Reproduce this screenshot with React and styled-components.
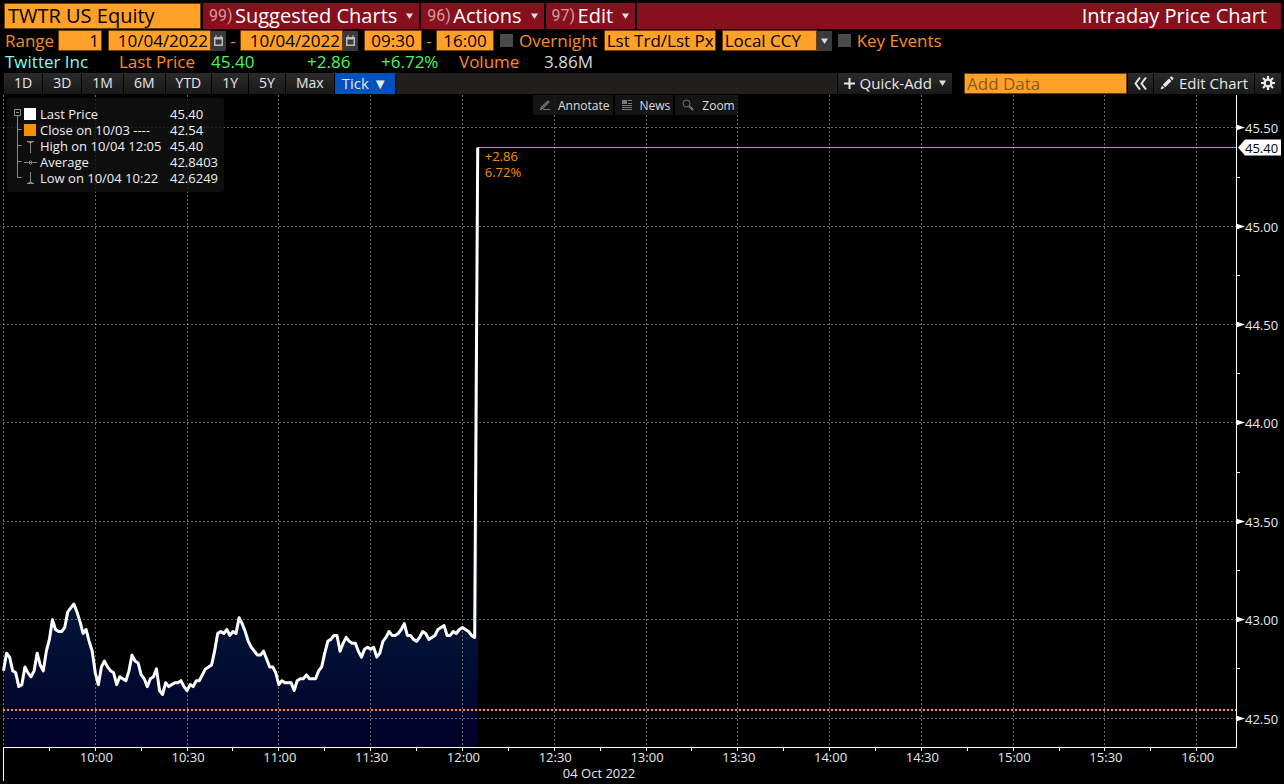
import { useLayoutEffect, useRef, useState } from "react";
import styled, { createGlobalStyle } from "styled-components";

const COLORS = {
  amber: "#ffa028",
  label: "#fb8b1e",
  maroon: "#87101d",
  up: "#4af658",
  cyan: "#7fffe4",
  text: "#e8e8e8",
};

/* One price per minute, from 09:30 to 12:05 */
const PRICES = [
  42.74, 42.83, 42.81, 42.74, 42.73, 42.66, 42.67, 42.76, 42.73, 42.71,
  42.74, 42.83, 42.77, 42.74, 42.84, 42.9, 43.0, 42.95, 42.94, 42.94,
  42.96, 43.04, 43.06, 43.08, 43.04, 42.99, 42.93, 42.95, 42.89, 42.84,
  42.73, 42.67, 42.76, 42.79, 42.76, 42.74, 42.73, 42.67, 42.71, 42.7,
  42.69, 42.74, 42.82, 42.79, 42.78, 42.72, 42.7, 42.66, 42.7, 42.71,
  42.75, 42.64, 42.62, 42.68, 42.66, 42.67, 42.68, 42.68, 42.69, 42.66,
  42.64, 42.67, 42.66, 42.69, 42.69, 42.72, 42.75, 42.76, 42.77, 42.84,
  42.93, 42.94, 42.93, 42.95, 42.92, 42.94, 42.93, 43.01, 42.98, 42.94,
  42.89, 42.86, 42.84, 42.82, 42.82, 42.84, 42.8, 42.76, 42.76, 42.73,
  42.67, 42.69, 42.68, 42.68, 42.68, 42.64, 42.69, 42.7, 42.7, 42.72,
  42.7, 42.7, 42.7, 42.74, 42.76, 42.83, 42.89, 42.9, 42.92, 42.92,
  42.84, 42.88, 42.91, 42.89, 42.88, 42.88, 42.84, 42.81, 42.85, 42.86,
  42.85, 42.86, 42.81, 42.83, 42.89, 42.91, 42.94, 42.92, 42.92, 42.93,
  42.95, 42.98, 42.92, 42.92, 42.9, 42.89, 42.91, 42.94, 42.93, 42.9,
  42.91, 42.92, 42.95, 42.96, 42.97, 42.92, 42.92, 42.94, 42.93, 42.95,
  42.96, 42.95, 42.94, 42.92, 42.91, 45.4,
];

const PRICE_MIN = 42.353;
const PRICE_MAX = 45.667;
const OPEN_MINUTE = 9 * 60 + 30;
const SESSION_MINUTES = 403;
const CLOSE_PRICE = 42.54;
const LAST_PRICE = 45.4;
const MARGIN = { left: 3, right: 48, bottom: 37 };

const RANGES = ["1D", "3D", "1M", "6M", "YTD", "1Y", "5Y", "Max"];

function App() {
  return (
    <Page>
      <GlobalStyle />
      <TitleBar />
      <Filters />
      <Quote />
      <Toolbar />
      <ChartPanel />
    </Page>
  );
}

function TitleBar() {
  return (
    <TitleRow>
      <SecurityInput aria-label="Security" defaultValue="TWTR US Equity" />
      <MenuButton>
        <MenuNumber>99)</MenuNumber>Suggested Charts<Caret />
      </MenuButton>
      <MenuButton>
        <MenuNumber>96)</MenuNumber>Actions<Caret />
      </MenuButton>
      <MenuButton>
        <MenuNumber>97)</MenuNumber>Edit<Caret />
      </MenuButton>
      <PageTitle>Intraday Price Chart</PageTitle>
    </TitleRow>
  );
}

function Caret() {
  return (
    <CaretIcon width="7" height="6" viewBox="0 0 7 6" aria-hidden="true">
      <path d="M0 0.5h7L3.5 6z" fill="currentColor" />
    </CaretIcon>
  );
}

function DateField({ label, value }) {
  return (
    <Group>
      <Field $width={103} aria-label={label} defaultValue={value} />
      <IconButton aria-label={`Pick ${label}`}>
        <svg width="11" height="13" viewBox="0 0 11 13" aria-hidden="true">
          <path d="M1 3h9v9H1zM2.5 5.5v5h6v-5z" fill="#bdbdbd" fillRule="evenodd" />
          <path d="M3 1v3M8 1v3" stroke="#bdbdbd" />
        </svg>
      </IconButton>
    </Group>
  );
}

function Filters() {
  return (
    <FilterRow>
      <RangeLabel htmlFor="range">Range</RangeLabel>
      <Field id="range" $width={44} defaultValue="1" />
      <Group>
        <DateField label="start date" value="10/04/2022" />
        <Dash>-</Dash>
        <DateField label="end date" value="10/04/2022" />
      </Group>
      <Group>
        <Field $width={58} $center aria-label="Start time" defaultValue="09:30" />
        <Dash>-</Dash>
        <Field $width={58} $center aria-label="End time" defaultValue="16:00" />
      </Group>
      <CheckLabel>
        <Checkbox type="checkbox" />
        Overnight
      </CheckLabel>
      <Select $width={112} aria-label="Price source">
        <option>Lst Trd/Lst Px</option>
      </Select>
      <Group>
        <Select $width={95} aria-label="Currency">
          <option>Local CCY</option>
        </Select>
        <SelectArrow>
          <Caret />
        </SelectArrow>
      </Group>
      <CheckLabel>
        <Checkbox type="checkbox" />
        Key Events
      </CheckLabel>
    </FilterRow>
  );
}

function Quote() {
  return (
    <QuoteRow>
      <Name>Twitter Inc</Name>
      <Caption $width={92}>Last Price</Caption>
      <Change $width={96}>45.40</Change>
      <Change $width={74}>+2.86</Change>
      <Change $width={78}>+6.72%</Change>
      <Caption $width={85}>Volume</Caption>
      <Volume>3.86M</Volume>
    </QuoteRow>
  );
}

function Toolbar() {
  return (
    <ToolRow>
      {RANGES.map((range) => (
        <RangeButton key={range}>{range}</RangeButton>
      ))}
      <TickButton>Tick ▼</TickButton>
      <Spacer />
      <ActionButton>
        <svg width="11" height="11" viewBox="0 0 11 11" aria-hidden="true">
          <path d="M5.5 0v11M0 5.5h11" stroke="currentColor" strokeWidth="2" />
        </svg>
        Quick-Add
        <Caret />
      </ActionButton>
      <DataInput aria-label="Add Data" placeholder="Add Data" />
      <ActionButton aria-label="Collapse">
        <svg width="13" height="13" viewBox="0 0 13 13" aria-hidden="true">
          <path
            d="M6 0.5L1.5 6.5L6 12.5M12 0.5L7.5 6.5L12 12.5"
            fill="none"
            stroke="currentColor"
            strokeWidth="2"
          />
        </svg>
      </ActionButton>
      <ActionButton>
        <svg width="14" height="14" viewBox="0 0 14 14" aria-hidden="true">
          <path
            d="M0.5 13.5L2 9.5L4.5 12zM2.8 8.8L9 2.6L11.4 5L5.2 11.2zM9.8 1.8L11 0.6Q11.6 0.2 12.2 0.8L13.2 1.8Q13.8 2.4 13.3 3L12.2 4.2z"
            fill="currentColor"
          />
        </svg>
        Edit Chart
      </ActionButton>
      <ActionButton aria-label="Settings">
        <svg width="14" height="14" viewBox="0 0 14 14" aria-hidden="true">
          <circle cx="7" cy="7" r="3.4" fill="none" stroke="currentColor" strokeWidth="2.4" />
          <path
            d="M7 0v3M7 11v3M0 7h3M11 7h3M2 2l2.2 2.2M9.8 9.8L12 12M12 2L9.8 4.2M4.2 9.8L2 12"
            stroke="currentColor"
            strokeWidth="2.2"
          />
        </svg>
      </ActionButton>
    </ToolRow>
  );
}

function ChartPanel() {
  const ref = useRef(null);
  const [size, setSize] = useState(null);

  useLayoutEffect(() => {
    const measure = () => {
      const { width, height } = ref.current.getBoundingClientRect();
      setSize({ width, height });
    };
    measure();
    const observer = new ResizeObserver(measure);
    observer.observe(ref.current);
    return () => observer.disconnect();
  }, []);

  return (
    <Panel ref={ref}>
      {size && <Chart width={size.width} height={size.height} />}
      <Legend />
      <ChartTools>
        <ChartTool>
          <svg width="10" height="12" viewBox="0 0 10 12" aria-hidden="true">
            <path d="M0.5 10.5L1.5 8L8 2L9 3L3 9zM3 10.5h7" fill="none" stroke="#777" strokeWidth="1.2" />
          </svg>
          Annotate
        </ChartTool>
        <ChartTool>
          <svg width="10" height="10" viewBox="0 0 10 10" aria-hidden="true">
            <path d="M0 0h5v4H0zM6 0h4v1H6zM6 3h4v1H6zM0 5h10v1H0zM0 7h10v1H0zM0 9h10v1H0z" fill="#777" />
          </svg>
          News
        </ChartTool>
        <ChartTool>
          <svg width="12" height="12" viewBox="0 0 12 12" aria-hidden="true">
            <circle cx="4.5" cy="4.5" r="3.5" fill="none" stroke="#777" />
            <path d="M7.5 7.5L11 11" stroke="#777" strokeWidth="2" />
          </svg>
          Zoom
        </ChartTool>
      </ChartTools>
    </Panel>
  );
}

function formatTime(minute) {
  const hours = Math.floor(minute / 60);
  return `${hours}:${String(minute % 60).padStart(2, "0")}`;
}

function Chart({ width, height }) {
  const right = width - MARGIN.right;
  const bottom = height - MARGIN.bottom;
  const x = (minute) =>
    MARGIN.left + 0.5 + (minute / SESSION_MINUTES) * (right - MARGIN.left);
  const y = (price) =>
    ((PRICE_MAX - price) / (PRICE_MAX - PRICE_MIN)) * bottom;
  const crisp = (value) => Math.floor(value) + 0.5;

  const line = PRICES.map((price, minute) => `${x(minute)},${y(price)}`).join(" ");
  const lastX = x(PRICES.length - 1);
  const lastY = crisp(y(LAST_PRICE));

  const times = [];
  for (let minute = 0; minute <= 390; minute += 15) times.push(minute);
  const levels = [];
  for (let price = 42.5; price <= 45.5; price += 0.25) levels.push(price);

  return (
    <Plot role="img" aria-label="TWTR intraday price">
      <defs>
        <linearGradient id="area" gradientUnits="userSpaceOnUse" x1="0" x2="0" y1={bottom * 0.75} y2={bottom}>
          <stop offset="0" stopColor="#001a3a" />
          <stop offset="1" stopColor="#02002a" />
        </linearGradient>
      </defs>
      <polygon points={`${x(0)},${bottom} ${line} ${lastX},${bottom}`} fill="url(#area)" />
      <g stroke="#8c8c8c" strokeOpacity="0.75" strokeDasharray="2 2">
        {times.filter((minute) => minute % 30 === 0).map((minute) => (
          <line key={minute} x1={crisp(x(minute))} x2={crisp(x(minute))} y1="0" y2={bottom} />
        ))}
        {levels.filter((price) => price % 0.5 === 0).map((price) => (
          <line key={price} x1={MARGIN.left} x2={right} y1={crisp(y(price))} y2={crisp(y(price))} />
        ))}
      </g>
      <line
        x1={MARGIN.left}
        x2={right}
        y1={Math.round(y(CLOSE_PRICE))}
        y2={Math.round(y(CLOSE_PRICE))}
        stroke="#ff9a0c"
        strokeWidth="2"
        strokeDasharray="2 2"
      />
      <line x1={lastX} x2={right} y1={lastY} y2={lastY} stroke="#f39200" />
      <polyline points={line} fill="none" stroke="#fff" strokeWidth="3" strokeLinejoin="round" />

      <g stroke="#fff">
        <line x1={right + 0.5} x2={right + 0.5} y1="0" y2={bottom + 1} />
        <line x1={MARGIN.left} x2={right} y1={bottom + 0.5} y2={bottom + 0.5} />
        <line x1={MARGIN.left + 0.5} x2={MARGIN.left + 0.5} y1={bottom} y2={bottom + 34} />
        {times.slice(1).map((minute) => (
          <line key={minute} x1={crisp(x(minute))} x2={crisp(x(minute))} y1={bottom} y2={bottom + 4} />
        ))}
        {levels.filter((price) => price % 0.5 !== 0).map((price) => (
          <line key={price} x1={right} x2={right + 4} y1={crisp(y(price))} y2={crisp(y(price))} />
        ))}
      </g>

      {levels.filter((price) => price % 0.5 === 0).map((price) => {
        const top = crisp(y(price));
        return (
          <g key={price}>
            <path d={`M${right} ${top - 3}l9 3l-9 3z`} fill="#fff" />
            <AxisText x={right + 9} y={top + 5}>{price.toFixed(2)}</AxisText>
          </g>
        );
      })}
      <path d={`M${right + 2} ${lastY}l7 -8h36v16h-36z`} fill="#fff" />
      <AxisText x={right + 9} y={lastY + 5} $color="#000">{LAST_PRICE.toFixed(2)}</AxisText>

      {times.slice(1).filter((minute) => minute % 30 === 0).map((minute) => (
        <AxisText key={minute} x={x(minute) + 1} y={bottom + 15} textAnchor="middle">
          {formatTime(OPEN_MINUTE + minute)}
        </AxisText>
      ))}
      <AxisText x={width / 2 - 43} y={bottom + 31} textAnchor="middle">04 Oct 2022</AxisText>

      <AxisText x={lastX + 7} y={lastY + 13} $color="#f39200">+2.86</AxisText>
      <AxisText x={lastX + 7} y={lastY + 29} $color="#f39200">6.72%</AxisText>
    </Plot>
  );
}

function Legend() {
  return (
    <LegendBox>
      <svg width="10" height="80" viewBox="0 0 10 80" aria-hidden="true">
        <path
          d="M0.5 3.5h6v6h-6zM2 6.5h3M3.5 10v61.5M3.5 23.5h4M3.5 39.5h4M3.5 55.5h4M3.5 71.5h4"
          fill="none"
          stroke="#8a8a8a"
        />
      </svg>
      <LegendTable>
        <tbody>
          <tr>
            <td><Swatch $color="#fff" /></td>
            <th scope="row">Last Price</th>
            <td>45.40</td>
          </tr>
          <tr>
            <td><Swatch $color="#f39200" /></td>
            <th scope="row">Close on 10/03 ----</th>
            <td>42.54</td>
          </tr>
          <tr>
            <td><Marker d="M3 1.5h7M6.5 2v11M4.5 2.5h4" /></td>
            <th scope="row">High on 10/04 12:05</th>
            <td>45.40</td>
          </tr>
          <tr>
            <td><Marker d="M0 6.5h4M9 6.5h4M4.5 6.5l2 -2l2 2l-2 2zM5 6.5h3" /></td>
            <th scope="row">Average</th>
            <td>42.8403</td>
          </tr>
          <tr>
            <td><Marker d="M3 11.5h7M6.5 0v11M4.5 10.5h4" /></td>
            <th scope="row">Low on 10/04 10:22</th>
            <td>42.6249</td>
          </tr>
        </tbody>
      </LegendTable>
    </LegendBox>
  );
}

function Marker({ d }) {
  return (
    <svg width="13" height="13" viewBox="0 0 13 13" aria-hidden="true">
      <path d={d} fill="none" stroke="#8a8a8a" />
    </svg>
  );
}

const GlobalStyle = createGlobalStyle`
  * {
    box-sizing: border-box;
  }

  body {
    margin: 0;
    background: #000;
    color: ${COLORS.text};
    font-family: "Open Sans", "Noto Sans", sans-serif;
  }

  button, input, select {
    margin: 0;
    border: none;
    border-radius: 0;
    font: inherit;
    color: inherit;
  }
`;

const Page = styled.main`
  display: flex;
  flex-direction: column;
  height: 100vh;
  overflow: hidden;
`;

const TitleRow = styled.header`
  display: flex;
  gap: 2px;
  height: 30px;
  padding: 3px 3px 1px 4px;
  font-size: 20px;
  line-height: 26px;
  white-space: nowrap;
`;

const SecurityInput = styled.input`
  width: 197px;
  padding: 0 3px;
  border: 1px solid #6b3d05;
  background: ${COLORS.amber};
  color: #000;
`;

const MenuButton = styled.button`
  display: flex;
  align-items: center;
  padding: 0 6px;
  background: ${COLORS.maroon};
  color: #fff;
`;

const MenuNumber = styled.span`
  width: 26px;
  color: #d39aa2;
  font-family: Roboto, sans-serif;
  font-size: 16px;
  text-align: left;
`;

const CaretIcon = styled.svg`
  margin-left: 9px;
  color: #ddd;
`;

const PageTitle = styled.h1`
  flex: 1;
  margin: 0;
  padding-right: 14px;
  background: ${COLORS.maroon};
  color: #fff;
  font-size: 20px;
  font-weight: 400;
  text-align: right;
`;

const FilterRow = styled.form`
  display: flex;
  align-items: center;
  gap: 6px;
  height: 21px;
  padding-left: 5px;
  color: ${COLORS.label};
  font-size: 17px;
  line-height: 19px;
  white-space: nowrap;
`;

const RangeLabel = styled.label`
  width: 47px;
`;

const Field = styled.input`
  width: ${(p) => p.$width}px;
  height: 21px;
  padding: 0 2px;
  border: 1px solid #6b3d05;
  background: ${COLORS.amber};
  color: #000;
  text-align: ${(p) => (p.$center ? "center" : "right")};
`;

const Group = styled.div`
  display: flex;
  align-items: center;
`;

const IconButton = styled.button`
  display: grid;
  place-items: center;
  width: 15px;
  height: 20px;
  padding: 0;
  background: #3a3a3a;
`;

const Dash = styled.span`
  width: 14px;
  text-align: center;
`;

const CheckLabel = styled.label`
  display: flex;
  align-items: center;
  gap: 6px;
`;

const Checkbox = styled.input`
  appearance: none;
  width: 13px;
  height: 13px;
  background: #4a4a4a;

  &:checked {
    background: ${COLORS.amber};
  }
`;

const Select = styled.select`
  appearance: none;
  width: ${(p) => p.$width}px;
  height: 21px;
  padding: 0 2px;
  border: 1px solid #6b3d05;
  background: ${COLORS.amber};
  color: #000;
`;

const SelectArrow = styled.span`
  display: grid;
  place-items: center;
  width: 15px;
  height: 20px;
  background: #3a3a3a;

  ${CaretIcon} {
    margin: 0;
  }
`;

const QuoteRow = styled.section`
  display: flex;
  height: 21px;
  padding-left: 5px;
  font-size: 17px;
  line-height: 21px;
  white-space: nowrap;
`;

const Name = styled.span`
  width: 114px;
  color: ${COLORS.cyan};
`;

const Caption = styled.span`
  width: ${(p) => p.$width}px;
  color: ${COLORS.label};
`;

const Change = styled.span`
  width: ${(p) => p.$width}px;
  color: ${COLORS.up};
`;

const Volume = styled.span`
  color: #d8d8d8;
`;

const ToolRow = styled.nav`
  display: flex;
  gap: 1px;
  height: 23px;
  padding: 1px 3px 1px 4px;
  font-size: 15px;
  line-height: 20px;
  white-space: nowrap;
`;

const ToolButton = styled.button`
  padding: 0 10px 1px;
  background: linear-gradient(#2a2a2a, #191919);
  color: ${COLORS.text};
`;

const RangeButton = styled(ToolButton)`
  font-size: 14px;
`;

const TickButton = styled(ToolButton)`
  padding: 0 7px 1px;
  background: #0050c0;
`;

const Spacer = styled.div`
  flex: 1;
  background: #201f1b;
`;

const ActionButton = styled(ToolButton)`
  display: flex;
  align-items: center;
  gap: 5px;
  padding: 0 6px 1px;

  ${CaretIcon} {
    margin-left: 2px;
  }
`;

const DataInput = styled.input`
  width: 163px;
  margin-left: 11px;
  padding: 0 2px;
  border: 1px solid #6b3d05;
  background: ${COLORS.amber};
  font-size: 17px;

  &::placeholder {
    color: #8a5a1c;
    opacity: 1;
  }
`;

const Panel = styled.section`
  position: relative;
  flex: 1;
  min-height: 0;
`;

const Plot = styled.svg`
  display: block;
  width: 100%;
  height: 100%;
`;

const AxisText = styled.text`
  fill: ${(p) => p.$color || "#e8e8e8"};
  font-size: 13px;
`;

const LegendBox = styled.aside`
  position: absolute;
  top: 3px;
  left: 7px;
  display: flex;
  padding: 8px 6px 6px 7px;
  border-radius: 3px;
  background: rgb(17 17 17 / 0.8);
`;

const LegendTable = styled.table`
  border-collapse: collapse;
  font-size: 13px;
  line-height: 16px;
  color: #f0f0f0;

  td, th {
    height: 16px;
    padding: 0;
    font-weight: 400;
    text-align: left;
    white-space: nowrap;
  }

  th {
    width: 130px;
  }

  td:first-child {
    width: 16px;
    line-height: 0;
  }
`;

const Swatch = styled.span`
  display: block;
  width: 12px;
  height: 12px;
  background: ${(p) => p.$color};
`;

const ChartTools = styled.div`
  position: absolute;
  top: 0;
  left: 533px;
  display: flex;
  gap: 2px;
`;

const ChartTool = styled.button`
  display: flex;
  align-items: center;
  gap: 8px;
  height: 20px;
  padding: 0 3px 0 7px;
  background: rgb(24 24 24 / 0.85);
  color: #ddd;
  font-size: 12px;
`;

export default App;
